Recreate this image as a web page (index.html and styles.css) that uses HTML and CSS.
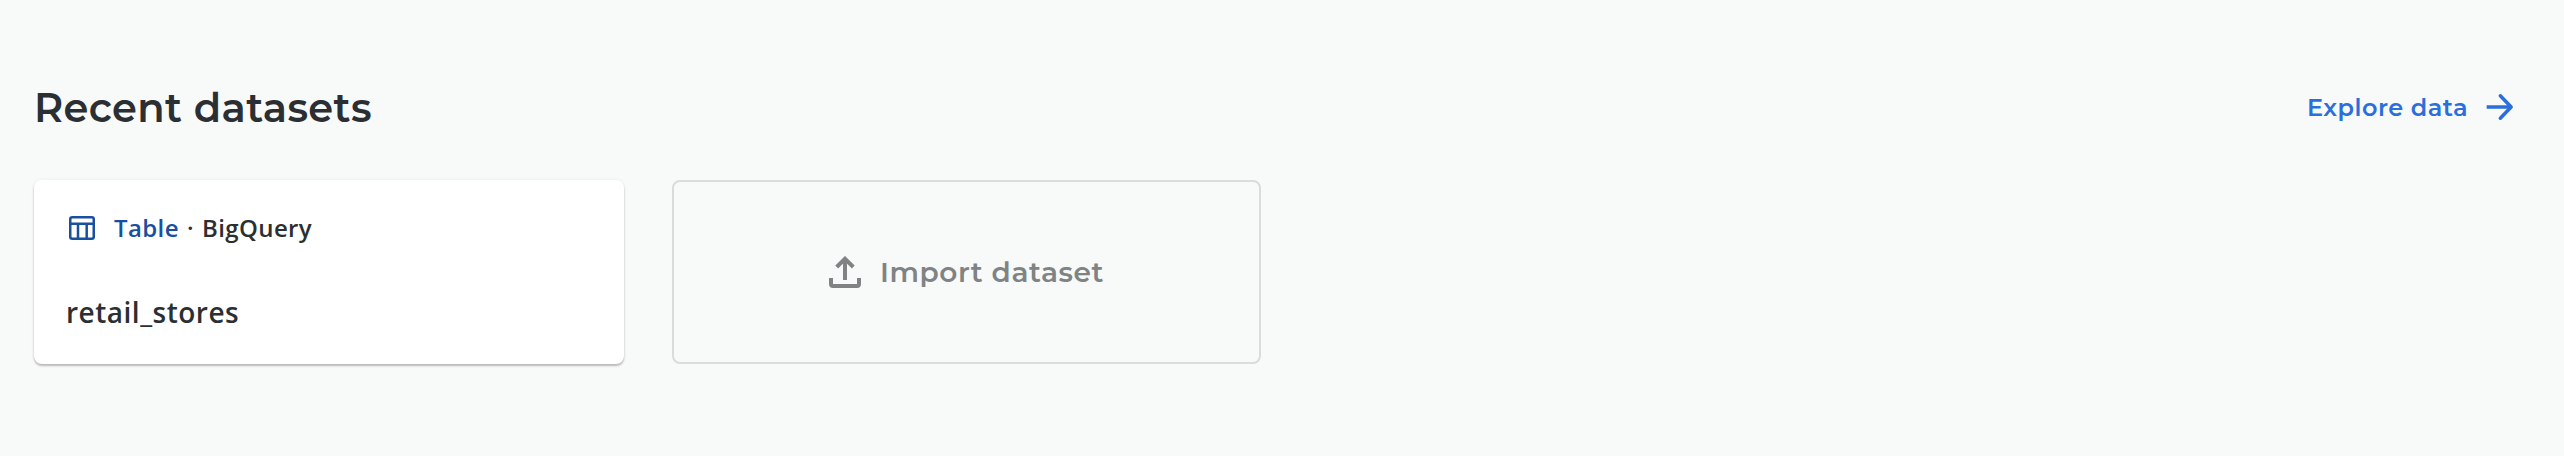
FILE: index.html
```
<!DOCTYPE html>
<html lang="en">
<head><meta charset="utf-8"><title>Recent datasets</title><link rel="stylesheet" href="styles.css"></head>
<body>
<main class="page">
  <header class="header">
    <h1 class="title">Recent datasets</h1>
    <a class="explore"><span>Explore data</span><svg class="arrow" viewBox="0 0 24 24"><path d="M4 12H18.5"/><path class="head" d="M12.2 5.3L18.7 12L12.2 18.7"/></svg></a>
  </header>
  <section class="cards">
    <article class="card">
      <div class="meta"><svg class="table-icon" viewBox="0 0 26 24"><rect x="1.25" y="1.25" width="23.5" height="21.5" rx="2"/><path d="M1 7.7H25M9 8V23M17.7 8V23"/></svg><span class="kind">Table</span><span class="dot">·</span><span>BigQuery</span></div>
      <div class="name">retail_stores</div>
    </article>
    <button class="import"><svg class="upload" viewBox="0 0 32 32"><path d="M16 24V3M7.7 11L16 2.8L24.3 11M2 22V28Q2 30 4 30H28Q30 30 30 28V22"/></svg><span>Import dataset</span></button>
  </section>
</main>
</body>
</html>
```
FILE: styles.css
```
*{box-sizing:border-box}
body{margin:0;background:#f8faf9;color:#2b2f33;font-family:Montserrat,"Open Sans",sans-serif}
.page{height:456px;padding:80px 44px 0 34px}
.header{display:flex;justify-content:space-between;align-items:center;height:56px}
.title{margin:-1px 0 0;font-size:40px;font-weight:600;letter-spacing:.35px}
.explore{display:flex;align-items:center;gap:12px;margin-top:-2px;color:#2a6fdb;font-size:24px;font-weight:600;letter-spacing:.48px}
svg{flex:none;fill:none;stroke:currentColor}
.arrow{width:40px;height:40px;stroke-width:2.1}
.head{stroke-linecap:round;stroke-linejoin:round}
.cards{display:flex;gap:48px;margin-top:44px}
.card{width:590px;height:184px;border-radius:8px;padding:32px;background:#fff;box-shadow:0 2px 2px rgba(0,0,0,.24),0 0 4px rgba(0,0,0,.06)}
.meta{display:flex;align-items:center;height:33px;margin-top:-1px;font:600 24px/33px "Open Sans",sans-serif;letter-spacing:.4px}
.table-icon{width:26px;height:24px;color:#1a4f9f;margin:1px 19px 0 3px;stroke-width:2.5}
.kind{color:#1a4f9f}
.dot{margin:0 8px}
.name{margin-top:49px;font:600 28px/38px "Open Sans",sans-serif;letter-spacing:.5px}
.import{display:flex;align-items:center;justify-content:center;gap:19px;width:589px;height:184px;border:2px solid #d9dcdb;border-radius:8px;background:none;color:#808383;font:600 28px Montserrat,"Open Sans",sans-serif;letter-spacing:.6px}
.upload{width:32px;height:32px;stroke-width:4}
```
